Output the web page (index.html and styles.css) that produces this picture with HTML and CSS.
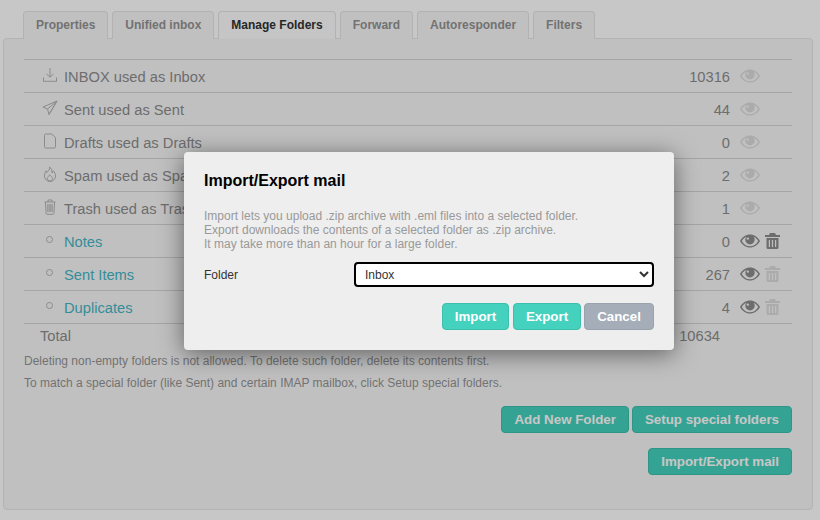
FILE: index.html
```html
<!DOCTYPE html>
<html lang="en">
<head>
<meta charset="utf-8">
<title>Manage Folders</title>
<link rel="stylesheet" href="styles.css">
</head>
<body>
<svg class="defs" width="0" height="0" aria-hidden="true">
  <symbol id="eye" viewBox="0 0 20 14"><path fill="currentColor" fill-rule="evenodd" d="M10 .5C5.800.5 2.200 3 0 7c2.200 4 5.800 6.500 10 6.500S17.800 11 20 7C17.800 3 14.200.5 10 .5zM10 12.300C6.600 12.300 3.700 10.300 1.800 7 3 5.100 4.500 3.700 6.300 2.800A4.700 4.700 0 0 0 5.300 5.800 4.700 4.700 0 0 0 14.700 5.800 4.700 4.700 0 0 0 13.700 2.800C15.500 3.700 17 5.100 18.200 7 16.300 10.300 13.400 12.300 10 12.300zM7.800 3.400a1.200 1.200 0 1 1 0 2.400 1.200 1.200 0 0 1 0-2.400z"/></symbol>
  <symbol id="bin" viewBox="0 0 15 16"><path fill="currentColor" fill-rule="evenodd" d="M5 0h5l1 2h4v2H0V2h4zM1.500 5h12v9.500A1.500 1.500 0 0 1 12 16H3a1.500 1.500 0 0 1-1.500-1.500zM3.800 7v7H5V7zM6.900 7v7h1.200V7zM10 7v7h1.200V7z"/></symbol>
</svg>
<div class="page">
  <nav class="tabs">
    <a class="tab">Properties</a>
    <a class="tab">Unified inbox</a>
    <a class="tab active">Manage Folders</a>
    <a class="tab">Forward</a>
    <a class="tab">Autoresponder</a>
    <a class="tab">Filters</a>
  </nav>
  <main class="panel">
    <ul class="folders">
      <li class="row">
        <svg class="ic" viewBox="0 0 16 16"><path d="M8 1v9M4.500 6.800 8 10.300l3.500-3.500M1.500 10.500v3.800h13v-3.800"/></svg>
        <span class="name">INBOX used as Inbox</span><span class="count">10316</span>
        <svg class="eye faint"><use href="#eye"/></svg><span class="slot"></span>
      </li>
      <li class="row">
        <svg class="ic" viewBox="0 0 16 16"><path d="M15 1 1 7l4.500 2L7 14.500zM15 1 5.500 9M15 1 7 14.500"/></svg>
        <span class="name">Sent used as Sent</span><span class="count">44</span>
        <svg class="eye faint"><use href="#eye"/></svg><span class="slot"></span>
      </li>
      <li class="row">
        <svg class="ic" viewBox="0 0 16 16"><path d="M2.500 2.300q0-1.300 1.300-1.300h6L13.500 4.500v9.200q0 1.300-1.300 1.300H3.800q-1.300 0-1.300-1.300z"/></svg>
        <span class="name">Drafts used as Drafts</span><span class="count">0</span>
        <svg class="eye faint"><use href="#eye"/></svg><span class="slot"></span>
      </li>
      <li class="row">
        <svg class="ic" viewBox="0 0 16 16"><path d="M7.500 1c.8 3-1.500 3.500-2.500 5.500-.5-.5-.7-1-.8-1.800C3 6 2.500 8 2.500 10a5.500 5.500 0 0 0 11 0c0-2-1-4-2.200-5.200-.2 1-.6 1.700-1.300 2.200C10.300 4.500 9.500 2.300 7.500 1zM8 15c-1.500 0-2.600-1-2.600-2.400 0-1.500 1.500-2.300 2.100-3.800 1.500 1.200 3 2.400 3 3.800C10.500 14 9.400 15 8 15z"/></svg>
        <span class="name">Spam used as Spam</span><span class="count">2</span>
        <svg class="eye faint"><use href="#eye"/></svg><span class="slot"></span>
      </li>
      <li class="row">
        <svg class="ic" viewBox="0 0 16 16"><path d="M2.500 3h11M6 3V1h4v2M3.500 3l.6 11.500q.1.800 1 .8h5.800q.9 0 1-.8L12.500 3M5.800 5v8M7.200 5v8M8.800 5v8M10.200 5v8"/></svg>
        <span class="name">Trash used as Trash</span><span class="count">1</span>
        <svg class="eye faint"><use href="#eye"/></svg><span class="slot"></span>
      </li>
      <li class="row">
        <span class="bullet"><i></i></span>
        <a class="name link">Notes</a><span class="count">0</span>
        <svg class="eye"><use href="#eye"/></svg><svg class="bin"><use href="#bin"/></svg>
      </li>
      <li class="row">
        <span class="bullet"><i></i></span>
        <a class="name link">Sent Items</a><span class="count">267</span>
        <svg class="eye"><use href="#eye"/></svg><svg class="bin faint"><use href="#bin"/></svg>
      </li>
      <li class="row">
        <span class="bullet"><i></i></span>
        <a class="name link">Duplicates</a><span class="count">4</span>
        <svg class="eye"><use href="#eye"/></svg><svg class="bin faint"><use href="#bin"/></svg>
      </li>
      <li class="total"><span class="total-label">Total</span><span class="total-count">10634</span></li>
    </ul>
    <p class="note first">Deleting non-empty folders is not allowed. To delete such folder, delete its contents first.</p>
    <p class="note">To match a special folder (like Sent) and certain IMAP mailbox, click Setup special folders.</p>
    <div class="actions">
      <button class="btn">Add New Folder</button>
      <button class="btn">Setup special folders</button>
    </div>
    <div class="actions second">
      <button class="btn">Import/Export mail</button>
    </div>
  </main>
</div>
<div class="overlay"></div>
<section class="modal">
  <h2 class="modal-title">Import/Export mail</h2>
  <p class="modal-desc">Import lets you upload .zip archive with .eml files into a selected folder.<br>Export downloads the contents of a selected folder as .zip archive.<br>It may take more than an hour for a large folder.</p>
  <div class="field">
    <label class="field-label" for="folder">Folder</label>
    <select class="field-select" id="folder"><option>Inbox</option></select>
  </div>
  <div class="modal-actions">
    <button class="btn modal-btn import">Import</button>
    <button class="btn modal-btn">Export</button>
    <button class="btn modal-btn cancel">Cancel</button>
  </div>
</section>
</body>
</html>
```
FILE: styles.css
```css
* { box-sizing: border-box; }
html, body { margin: 0; height: 100%; }
body {
  position: relative;
  width: 820px;
  height: 520px;
  overflow: hidden;
  background: #fff;
  font-family: "Liberation Sans", Arial, sans-serif;
  color: #8c8c8c;
}
.defs { position: absolute; }
.page { isolation: isolate; padding: 11px 7px 10px 3px; height: 520px; display: flex; flex-direction: column; }

.tabs { display: flex; gap: 4px; padding-left: 20px; }
.tab {
  position: relative;
  height: 28px;
  margin-bottom: -1px;
  padding: 0 12px 2px;
  display: flex;
  align-items: center;
  font-size: 12px;
  font-weight: 700;
  color: #929292;
  background: #f7f7f7;
  border: 1px solid #e4e4e4;
  border-bottom: 0;
  border-radius: 4px 4px 0 0;
}
.tab.active { color: #333; background: #fdfdfd; z-index: 1; }

.panel {
  flex: 1;
  padding: 20px 20px 0;
  background: #f7f7f7;
  border: 1px solid #e6e6e6;
  border-radius: 4px;
}
.folders { list-style: none; margin: 0; padding: 0; }
.row {
  height: 33px;
  display: flex;
  align-items: center;
  border-top: 1px solid #d4d4d4;
  font-size: 14.700px;
  padding-top: 1px;
}
.ic {
  width: 16px;
  height: 16px;
  margin: -3px 6px 0 18px;
  fill: none;
  stroke: #b2b2b2;
  stroke-width: 1;
}
.bullet { width: 40px; display: flex; justify-content: center; padding-left: 11px; margin-top: -4px; }
.bullet i { width: 7px; height: 7px; border: 1px solid #b2b2b2; border-radius: 50%; }
.name { flex: 1; }
.link { color: #45b5c4; }
.count { color: #8c8c8c; }
.eye { width: 20px; height: 14px; margin: -2px 0 0 10px; color: #8c8c8c; }
.eye.faint { color: #dcdcdc; }
.bin { width: 15px; height: 16px; margin: -2px 12px 0 5px; color: #8c8c8c; }
.bin.faint { color: #dcdcdc; }
.slot { width: 32px; }
.total {
  height: 25px;
  display: flex;
  align-items: center;
  justify-content: space-between;
  border-top: 1px solid #d4d4d4;
  padding: 0 72px 0 16px;
  font-size: 14.700px;
}
.note { margin: 0; font-size: 12px; line-height: 14px; color: #939393; }
.note.first { margin-top: 6px; }
.note + .note { margin-top: 8px; }
.actions { display: flex; justify-content: flex-end; gap: 3px; margin-top: 16px; }
.actions.second { margin-top: 15px; }
.btn {
  height: 27px;
  padding: 0 12px;
  font: 700 13.333px "Liberation Sans", Arial, sans-serif;
  color: #fff;
  background: #44d1bd;
  border: 1px solid #3cc0ad;
  border-radius: 4px;
}

.overlay { position: absolute; inset: 0; background: rgba(0, 0, 0, .22); }
.modal {
  position: absolute;
  left: 184px;
  top: 152px;
  width: 490px;
  height: 198px;
  padding: 20px;
  background: #eee;
  border-radius: 4px;
  box-shadow: 0 4px 24px rgba(0, 0, 0, .5);
}
.modal-title { margin: 0; font-size: 16px; line-height: 18px; font-weight: 700; color: #000; }
.modal-desc { margin: 19px 0 0; font-size: 12px; line-height: 14px; color: #999; }
.field { display: flex; align-items: center; margin-top: 11px; }
.field-label { width: 150px; font-size: 12px; color: #333; }
.field-select {
  width: 300px;
  height: 25px;
  padding-left: 5px;
  font: 12px "Liberation Sans", Arial, sans-serif;
  color: #333;
  background: #fff;
  border: 2px solid #000;
  border-radius: 4px;
}
.modal-actions { display: flex; justify-content: flex-end; gap: 4px; margin-top: 16px; }
.modal-btn { width: 68px; padding: 0; }
.modal-btn.import { width: 67px; }
.modal-btn.cancel { width: 70px; background: #a5adb8; border-color: #9aa2ae; margin-left: -1px; }
```
